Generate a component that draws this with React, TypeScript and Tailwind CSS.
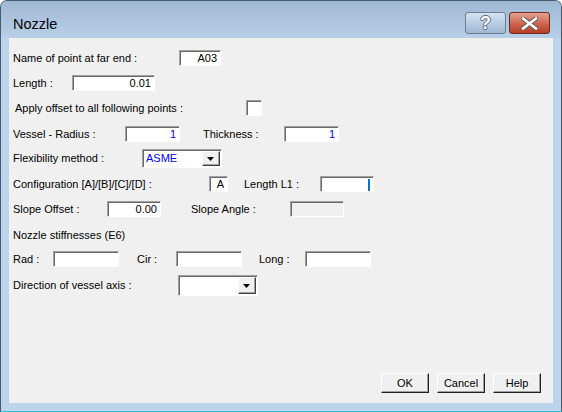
import React from 'react'

const font = "font-['Liberation_Sans',Arial,sans-serif]"

const Field = ({ w, value, blue, disabled, h = 'h-[16px]', caret }: { w: string; value?: string; blue?: boolean; disabled?: boolean; h?: string; caret?: boolean }) => (
  <div
    className={`${w} ${h} shrink-0 relative flex items-center justify-end pr-[3px] border border-t-[#a0a0a0] border-l-[#a0a0a0] border-b-white border-r-white shadow-[inset_1px_1px_0_#696969] ${disabled ? 'bg-[#f0f0f0]' : 'bg-white'} ${blue ? 'text-[#0000ff]' : 'text-black'}`}
  >
    {value}
    {caret && <div className="absolute right-[3px] top-[2px] w-[2px] h-[12px] bg-[#0a74d6]" />}
  </div>
)

const Combo = ({ w, h, value }: { w: string; h: string; value?: string }) => (
  <div className={`${w} ${h} shrink-0 flex items-center bg-white border border-t-[#a0a0a0] border-l-[#a0a0a0] border-b-white border-r-white shadow-[inset_1px_1px_0_#696969] pl-[3px] pr-[1px] py-[1px]`}>
    <span className="flex-1 text-[#0000ff]">{value}</span>
    <div className="w-[18px] h-full flex items-center justify-center bg-[#f0f0f0] border border-t-white border-l-white border-r-[#404040] border-b-[#404040] shadow-[inset_-1px_-1px_0_#a0a0a0]">
      <svg width="8" height="4" viewBox="0 0 8 4"><path d="M0 0h7L3.5 4z" fill="#000" /></svg>
    </div>
  </div>
)

const Btn = ({ label }: { label: string }) => (
  <div className="w-[48px] h-[20px] flex items-center justify-center bg-[#f0f0f0] border border-t-white border-l-white border-r-[#202020] border-b-[#202020] shadow-[inset_-1px_-1px_0_#a0a0a0]">
    {label}
  </div>
)

const App = () => {
  return (
    <div className={`w-[562px] h-[412px] flex flex-col bg-[#bcd4ec] border border-[#4a5a6e] border-b-[#30c2e2] rounded-t-[7px] overflow-hidden ${font}`}>
      <div className="h-[37px] shrink-0 flex items-start bg-gradient-to-b from-[#9fb8d3] to-[#b8cfe8]">
        <span className="ml-[12px] mt-[15px] leading-[17px] text-[14.5px] text-black">Nozzle</span>
        <div className="ml-auto mr-[11px] mt-[11px] flex gap-[3px]">
          <div className="w-[41px] h-[22px] rounded-[3px] border border-[#6c7d93] bg-gradient-to-b from-[#d6e3f0] via-[#b9cde3] to-[#9fb8d4] flex items-center justify-center">
            <span className="text-white font-bold text-[18px] leading-none [text-shadow:1px_0_0_#5b6678,-1px_0_0_#5b6678,0_1px_0_#5b6678,0_-1px_0_#5b6678]">?</span>
          </div>
          <div className="w-[41px] h-[22px] rounded-[3px] border border-[#6a2b22] bg-gradient-to-b from-[#e3a291] via-[#cf6a52] to-[#b83c25] flex items-center justify-center">
            <svg width="17" height="13" viewBox="0 0 17 13">
              <path d="M2 1.5 L15 11.5 M15 1.5 L2 11.5" stroke="#5a5a5a" strokeWidth="4.6" strokeLinecap="round" />
              <path d="M2 1.5 L15 11.5 M15 1.5 L2 11.5" stroke="#fff" strokeWidth="2.8" strokeLinecap="round" />
            </svg>
          </div>
        </div>
      </div>

      <div className="flex-1 px-[8px] pb-[8px] flex">
        <div className="flex-1 bg-[#f0f0f0] flex flex-col text-[11px] text-black leading-none">
          <div className="mt-[12px] h-[16px] flex items-center pl-[4px]">
            <span className="w-[166px] shrink-0">Name of point at far end :</span>
            <Field w="w-[42px]" value="A03" />
          </div>

          <div className="mt-[9px] h-[16px] flex items-center pl-[4px]">
            <span className="w-[59px] shrink-0">Length :</span>
            <Field w="w-[83px]" value="0.01" />
          </div>

          <div className="mt-[9px] h-[16px] flex items-center pl-[6px]">
            <span className="w-[231px] shrink-0">Apply offset to all following points :</span>
            <div className="w-[16px] h-[16px] bg-white border border-t-[#a0a0a0] border-l-[#a0a0a0] border-b-white border-r-white shadow-[inset_1px_1px_0_#696969]" />
          </div>

          <div className="mt-[10px] h-[16px] flex items-center pl-[4px]">
            <span className="w-[112px] shrink-0">Vessel - Radius :</span>
            <Field w="w-[55px]" value="1" blue />
            <span className="ml-[23px] w-[81px] shrink-0">Thickness :</span>
            <Field w="w-[55px]" value="1" blue />
          </div>

          <div className="mt-[7px] h-[19px] flex items-center pl-[4px]">
            <span className="w-[129px] shrink-0">Flexibility method :</span>
            <Combo w="w-[80px]" h="h-[19px]" value="ASME" />
          </div>

          <div className="mt-[8px] h-[16px] flex items-center pl-[4px]">
            <span className="w-[196px] shrink-0">Configuration [A]/[B]/[C]/[D] :</span>
            <Field w="w-[19px]" value="A" />
            <span className="ml-[16px] w-[76px] shrink-0">Length L1 :</span>
            <Field w="w-[54px]" caret />
          </div>

          <div className="mt-[9px] h-[16px] flex items-center pl-[4px]">
            <span className="w-[94px] shrink-0">Slope Offset :</span>
            <Field w="w-[54px]" value="0.00" />
            <span className="ml-[30px] w-[99px] shrink-0">Slope Angle :</span>
            <Field w="w-[54px]" disabled />
          </div>

          <div className="mt-[10px] h-[16px] flex items-center pl-[4px]">
            <span>Nozzle stiffnesses (E6)</span>
          </div>

          <div className="mt-[8px] h-[16px] flex items-center pl-[4px]">
            <span className="w-[40px] shrink-0">Rad :</span>
            <Field w="w-[66px]" />
            <span className="ml-[18px] w-[39px] shrink-0">Cir :</span>
            <Field w="w-[66px]" />
            <span className="ml-[17px] w-[46px] shrink-0">Long :</span>
            <Field w="w-[66px]" />
          </div>

          <div className="mt-[8px] h-[21px] flex items-center pl-[4px]">
            <span className="w-[165px] shrink-0">Direction of vessel axis :</span>
            <Combo w="w-[80px]" h="h-[21px]" />
          </div>

          <div className="mt-auto mb-[10px] mr-[12px] flex justify-end gap-[8px]">
            <Btn label="OK" />
            <Btn label="Cancel" />
            <Btn label="Help" />
          </div>
        </div>
      </div>
    </div>
  )
}

export default App
